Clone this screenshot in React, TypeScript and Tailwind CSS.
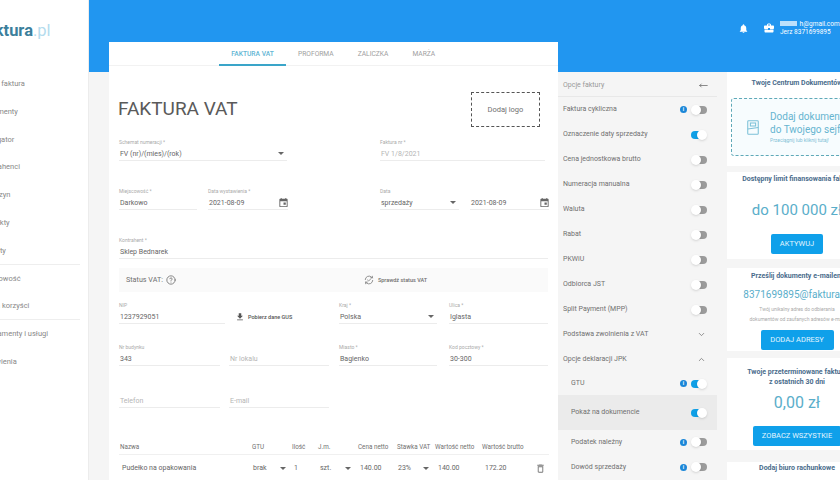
import { ChevronDown, ChevronUp, CircleHelp, MoveLeft } from 'lucide-react'

const NAV = [
  ['Nowa faktura', false],
  ['Dokumenty', false],
  ['Nawigator', false],
  ['Kontrahenci', false],
  ['Magazyn', false],
  ['Produkty', false],
  ['Raporty', true],
  ['Księgowość', false],
  ['Strefa korzyści', true],
  ['Abonamenty i usługi', false],
  ['Ustawienia', false],
] as const

const OPTIONS = [
  ['Faktura cykliczna', true, false],
  ['Oznaczenie daty sprzedaży', false, true],
  ['Cena jednostkowa brutto', false, false],
  ['Numeracja manualna', false, false],
  ['Waluta', false, false],
  ['Rabat', false, false],
  ['PKWiU', false, false],
  ['Odbiorca JST', false, false],
  ['Split Payment (MPP)', false, false],
] as const

function MaterialIcon({ d, size, className }: { d: string; size: number; className?: string }) {
  return (
    <svg viewBox="0 0 24 24" width={size} height={size} fill="currentColor" className={className}>
      <path d={d} />
    </svg>
  )
}

const ICON_BELL = 'M12 22c1.1 0 2-.9 2-2h-4c0 1.1.9 2 2 2zm6-6v-5c0-3.07-1.63-5.64-4.5-6.32V4c0-.83-.67-1.5-1.5-1.5s-1.5.67-1.5 1.5v.68C7.64 5.36 6 7.92 6 11v5l-2 2v1h16v-1l-2-2z'
const ICON_CASE = 'M10 16v-1H3.01L3 19c0 1.11.89 2 2 2h14c1.11 0 2-.89 2-2v-4h-7v1h-4zm10-9h-4.01V5l-2-2h-4l-2 2v2H4c-1.1 0-2 .9-2 2v3c0 1.11.89 2 2 2h6v-2h4v2h6c1.1 0 2-.9 2-2V9c0-1.1-.9-2-2-2zm-6 0h-4V5h4v2z'
const ICON_EVENT = 'M19 4h-1V2h-2v2H8V2H6v2H5c-1.1 0-2 .9-2 2v14c0 1.1.9 2 2 2h14c1.1 0 2-.9 2-2V6c0-1.1-.9-2-2-2zm0 16H5V9h14v11zM12 12h5v5h-5z'
const ICON_DOWNLOAD = 'M19 9h-4V3H9v6H5l7 7 7-7zM5 18v2h14v-2H5z'
const ICON_TRASH = 'M6 19c0 1.1.9 2 2 2h8c1.1 0 2-.9 2-2V7H6v12zM8 9h8v10H8V9zm7.5-5-1-1h-5l-1 1H5v2h14V4h-3.5z'

function Toggle({ on }: { on: boolean }) {
  return (
    <span className="relative block w-[16px] h-[8px] shrink-0">
      <span className={on ? 'absolute left-0 top-0 w-[12px] h-[8px] rounded-full bg-[#0f9fe6]' : 'absolute right-0 top-0 w-[12px] h-[8px] rounded-full bg-[#9b9b9b]'} />
      <span className={on ? 'absolute right-0 -top-px w-[10px] h-[10px] rounded-full bg-white shadow-sm' : 'absolute left-0 -top-px w-[10px] h-[10px] rounded-full bg-white shadow-sm'} />
    </span>
  )
}

function InfoDot() {
  return (
    <span className="w-[7px] h-[7px] rounded-full bg-[#1b87d8] flex items-center justify-center text-white text-[5px] font-bold leading-none">i</span>
  )
}

function OptionRow({ label, info, on, indent, className = 'h-[25px]' }: { label: string; info?: boolean; on?: boolean; indent?: boolean; className?: string }) {
  return (
    <div className={`flex items-center pr-[10px] text-[7px] text-[#707070] ${indent ? 'pl-[13px]' : 'pl-[5px]'} ${className}`}>
      <span className="flex-1 truncate">{label}</span>
      {info && <span className="mr-[4px]"><InfoDot /></span>}
      <Toggle on={!!on} />
    </div>
  )
}

function Caret() {
  return <i className="w-0 h-0 border-x-[3px] border-x-transparent border-t-[3px] border-t-[#666]" />
}

function Field({ label, value, width, muted, caret, date, className = '' }: { label?: string; value: string; width: string; muted?: boolean; caret?: boolean; date?: boolean; className?: string }) {
  return (
    <div className={`${width} shrink-0 border-b border-[#ececec] h-[23px] relative ${className}`}>
      <div className="text-[5px] leading-[8px] h-[8px] text-[#aaa] whitespace-nowrap">{label}</div>
      <div className={`text-[7px] leading-[17px] pl-px ${muted ? 'text-[#b5b5b5]' : 'text-[#666]'}`}>{value}</div>
      {caret && <span className="absolute right-[3px] top-[14px] flex"><Caret /></span>}
      {date && <MaterialIcon d={ICON_EVENT} size={11} className="absolute -right-[1px] top-[10px] text-[#666]" />}
    </div>
  )
}

function SideCard({ title, className, children }: { title: React.ReactNode; className: string; children?: React.ReactNode }) {
  return (
    <div className={`bg-white flex flex-col items-center text-center ${className}`}>
      <div className="text-[7px] leading-[10px] font-bold text-[#4a6c8c] whitespace-nowrap">{title}</div>
      {children}
    </div>
  )
}

function BlueButton({ label, width }: { label: string; width: string }) {
  return (
    <div className={`${width} h-[20px] rounded-[2px] bg-[#0fa0ea] text-[#e3f5ff] text-[7.5px] flex items-center justify-center`}>{label}</div>
  )
}

export default function App() {
  return (
    <div className="flex w-[840px] h-[480px] overflow-hidden bg-[#f5f5f5] font-['Roboto',sans-serif]">
      <aside className="w-[89px] shrink-0 bg-white border-r border-[#ececec] overflow-hidden">
        <div className="h-[70px] pt-[21px] -ml-[20px] text-[16.5px] leading-[20px] whitespace-nowrap font-bold text-[#3c7f9c]">
          faktura<span className="font-normal text-[#b4dcee]">.pl</span>
        </div>
        <nav className="-ml-[20px] whitespace-nowrap text-[7.5px] text-[#888]">
          {NAV.map(([name, divider]) => (
            <div key={name} className={`h-[27.8px] pt-[8px] leading-[12px] ${divider ? 'border-b border-[#eeeeee] w-[100px]' : ''}`}>{name}</div>
          ))}
        </nav>
      </aside>

      <main className="flex-1 min-w-0 flex flex-col">
        <header className="h-[72px] shrink-0 bg-[#2196f0] flex justify-end items-start pt-[20px] text-white">
          <div className="flex items-center">
            <MaterialIcon d={ICON_BELL} size={11} className="mr-[14px]" />
            <MaterialIcon d={ICON_CASE} size={12} className="mr-[5px]" />
            <div className="w-[60px] text-[6.5px] leading-[8px] whitespace-nowrap">
              <div><span className="inline-block w-[17px] h-[5px] bg-white/70 mr-[1px]" /> h@gmail.com</div>
              <div>Jerz 8371699895</div>
            </div>
          </div>
        </header>

        <div className="flex items-start -mt-[30px] pl-[20px]">
          <section className="w-[449px] h-[438px] shrink-0 bg-white pl-[10px] pr-[9px] overflow-hidden">
            <div className="flex h-[24px] -mx-[10px] border-b border-[#f2f2f2] pl-[110px] text-[6.7px] text-[#a0a0a0]">
              <div className="w-[67px] h-[24px] border-b-2 border-[#3aa5c9] text-center font-medium text-[#62b6d4] leading-[24px]">FAKTURA VAT</div>
              <div className="ml-[12px] leading-[24px]">PROFORMA</div>
              <div className="ml-[24px] leading-[24px]">ZALICZKA</div>
              <div className="ml-[24px] leading-[24px]">MARŻA</div>
            </div>

            <div className="flex justify-between items-start pt-[26px] pr-[9px] h-[72px]">
              <h1 className="text-[19px] leading-[22px] mt-[6px] -ml-px text-[#5a5a5a]">FAKTURA VAT</h1>
              <div className="w-[69px] h-[35px] border border-dashed border-[#555] flex items-center justify-center text-[7.5px] text-[#707070]">Dodaj logo</div>
            </div>

            <div className="flex gap-[93px] h-[49px] items-start">
              <Field label="Schemat numeracji *" value="FV (nr)/(mies)/(rok)" width="w-[168px]" caret />
              <Field label="Faktura nr *" value="FV 1/8/2021" width="w-[165px]" muted />
            </div>
            <div className="flex h-[49px] items-start">
              <Field label="Miejscowość *" value="Darkowo" width="w-[78px]" />
              <Field label="Data wystawienia *" value="2021-08-09" width="w-[80px]" date className="ml-[11px]" />
              <Field label="Data" value="sprzedaży" width="w-[79px]" caret className="ml-[92px]" />
              <Field value="2021-08-09" width="w-[79px]" date className="ml-[11px]" />
            </div>
            <div className="h-[32px]">
              <Field label="Kontrahent *" value="Sklep Bednarek" width="w-[429px]" />
            </div>
            <div className="w-[429px] h-[24px] bg-[#fafafa] flex items-center text-[7.2px] text-[#707070] pl-[7px]">
              <span>Status VAT:</span>
              <CircleHelp size={10} className="ml-[3px]" />
              <svg viewBox="0 0 24 24" width={10} height={10} fill="none" stroke="currentColor" strokeWidth={1.8} strokeLinecap="round" strokeLinejoin="round" className="ml-[188px]">
                <path d="M3 11a9 9 0 0 1 15-6l2 2M21 13a9 9 0 0 1-15 6l-2-2" />
                <path d="M20 3v4h-4M4 21v-4h4M8.5 12l2.5 2.5 4.5-4.5" />
              </svg>
              <span className="ml-[4px] text-[5.5px] font-medium">Sprawdź status VAT</span>
            </div>
            <div className="flex h-[42px] mt-[9px] items-start">
              <Field label="NIP" value="1237929051" width="w-[106px]" />
              <div className="w-[114px] shrink-0 flex items-center mt-[11px] pl-[10px] text-[5.5px] font-medium text-[#555]">
                <MaterialIcon d={ICON_DOWNLOAD} size={10} className="mr-[3px]" />Pobierz dane GUS
              </div>
              <Field label="Kraj *" value="Polska" width="w-[98px]" caret />
              <Field label="Ulica *" value="Iglasta" width="w-[99px]" className="ml-[12px]" />
            </div>
            <div className="flex h-[42px] items-start">
              <Field label="Nr budynku" value="343" width="w-[101px]" />
              <Field value="Nr lokalu" muted width="w-[100px]" className="ml-[9px]" />
              <Field label="Miasto *" value="Bagienko" width="w-[98px]" className="ml-[10px]" />
              <Field label="Kod pocztowy *" value="30-300" width="w-[99px]" className="ml-[12px]" />
            </div>
            <div className="flex h-[55px] items-start">
              <Field value="Telefon" muted width="w-[101px]" />
              <Field value="E-mail" muted width="w-[100px]" className="ml-[9px]" />
            </div>

            <div className="grid grid-cols-[132px_40px_26px_40px_39px_38px_47px_1fr] h-[15px] border-b border-[#f0f0f0] text-[6.3px] leading-[14px] text-[#707070] pl-px whitespace-nowrap">
              <span>Nazwa</span><span>GTU</span><span>Ilość</span><span>J.m.</span><span>Cena netto</span><span>Stawka VAT</span><span>Wartość netto</span><span>Wartość brutto</span>
            </div>
            <div className="grid grid-cols-[131px_41px_26px_40px_38px_40px_47px_50px_1fr] h-[26px] items-center text-[7px] text-[#666] pl-[3px] whitespace-nowrap">
              <span>Pudełko na opakowania</span>
              <span className="flex items-center justify-between pr-[8px]">brak<Caret /></span>
              <span>1</span>
              <span className="flex items-center justify-between pr-[9px]">szt.<Caret /></span>
              <span>140.00</span>
              <span className="flex items-center justify-between pr-[9px]">23%<Caret /></span>
              <span>140.00</span>
              <span>172.20</span>
              <MaterialIcon d={ICON_TRASH} size={11} className="text-[#777]" />
            </div>
          </section>

          <section className="w-[159px] shrink-0 mt-[30px] h-[408px] overflow-hidden">
            <div className="h-[25px] pt-[2px] flex items-center justify-between pl-[5px] pr-[9px] border-b border-[#e8e8e8] text-[7px] text-[#999]">
              <span>Opcje faktury</span>
              <MoveLeft size={9} className="text-[#666]" />
            </div>
            {OPTIONS.map(([label, info, on]) => (
              <OptionRow key={label} label={label} info={info} on={on} />
            ))}
            <div className="h-[25px] flex items-center justify-between pl-[5px] pr-[11px] text-[7px] text-[#707070]">
              <span>Podstawa zwolnienia z VAT</span>
              <ChevronDown size={9} />
            </div>
            <div className="h-[25px] flex items-center justify-between pl-[5px] pr-[11px] text-[7px] text-[#707070]">
              <span>Opcje deklaracji JPK</span>
              <ChevronUp size={9} />
            </div>
            <OptionRow label="GTU" info on indent className="h-[23px]" />
            <OptionRow label="Pokaż na dokumencie" on indent className="h-[35px] bg-[#ebebeb]" />
            <OptionRow label="Podatek należny" info indent className="h-[24px]" />
            <OptionRow label="Dowód sprzedaży" info indent className="h-[26px]" />
          </section>

          <section className="w-[140px] shrink-0 ml-[10px] mt-[30px]">
            <SideCard title="Twoje Centrum Dokumentów" className="h-[94px] pt-[6px]">
              <div className="mt-[10px] ml-[4px] self-start w-[136px] h-[58px] rounded-[3px] border border-dashed border-[#5fa9b8] bg-[#f7fcfe] flex items-center pl-[15px] text-left">
                <svg viewBox="0 0 16 20" width={12} height={15} fill="none" stroke="#7cc0d8" strokeWidth={1.4} className="mr-[11px] shrink-0">
                  <rect x="1" y="1" width="14" height="18" rx="1" />
                  <rect x="4.5" y="4" width="7" height="4" />
                  <path d="M1 12l14-2" />
                </svg>
                <div className="whitespace-nowrap">
                  <div className="text-[10px] leading-[13px] text-[#66b4d0]">Dodaj dokumenty</div>
                  <div className="text-[10px] leading-[13px] text-[#66b4d0]">do Twojego sejfu</div>
                  <div className="text-[5px] leading-[8px] text-[#7fbfd6]">Przeciągnij lub kliknij tutaj!</div>
                </div>
              </div>
            </SideCard>
            <SideCard title="Dostępny limit finansowania faktur" className="mt-[6px] h-[87px] pt-[2px]">
              <div className="mt-[15px] text-[15px] leading-[22px] text-[#5aaeca] whitespace-nowrap">do 100 000 zł</div>
              <div className="mt-[13px]"><BlueButton label="AKTYWUJ" width="w-[52px]" /></div>
            </SideCard>
            <SideCard title="Prześlij dokumenty e-mailem" className="mt-[9px] h-[83px] pt-[3px]">
              <div className="mt-[6px] text-[10px] leading-[16px] text-[#5aaeca] whitespace-nowrap">8371699895@faktura.pl</div>
              <div className="mt-[1px] text-[5px] leading-[10px] text-[#aaa] whitespace-nowrap">Twój unikalny adres do odbierania</div>
              <div className="text-[5px] leading-[10px] text-[#aaa] whitespace-nowrap">dokumentów od zaufanych adresów e-mail</div>
              <div className="mt-[6px]"><BlueButton label="DODAJ ADRESY" width="w-[73px]" /></div>
            </SideCard>
            <SideCard title={<>Twoje przeterminowane faktury<br />z ostatnich 30 dni</>} className="mt-[7px] h-[92px] pt-[9px]">
              <div className="mt-[6px] text-[16px] leading-[20px] text-[#5aaeca]">0,00 zł</div>
              <div className="mt-[13px]"><BlueButton label="ZOBACZ WSZYSTKIE" width="w-[88px]" /></div>
            </SideCard>
            <SideCard title="Dodaj biuro rachunkowe" className="mt-[12px] h-[30px] pt-[1px]" />
          </section>
        </div>
      </main>
    </div>
  )
}
